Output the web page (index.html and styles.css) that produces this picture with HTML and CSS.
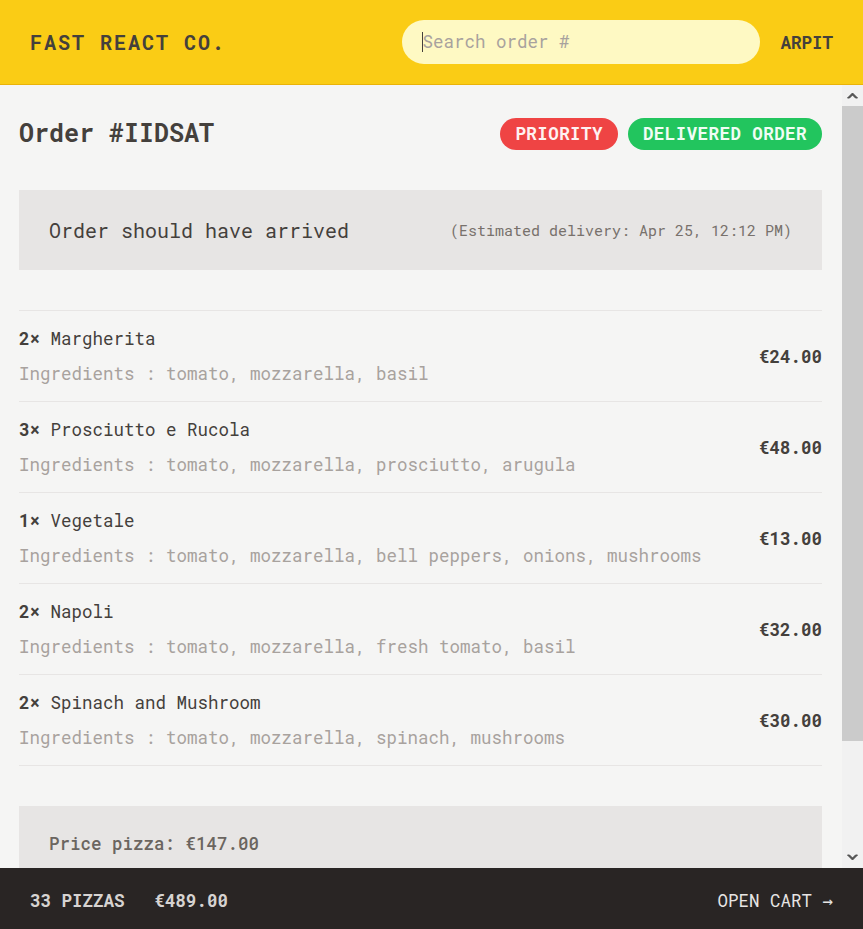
FILE: index.html
```html
<!DOCTYPE html>
<html lang="en">
<head>
<meta charset="utf-8">
<title>Fast React Co.</title>
<link rel="stylesheet" href="styles.css">
</head>
<body>
<div class="app">
  <header class="header">
    <a class="logo" href="#">Fast React Co.</a>
    <div class="header-right">
      <div class="search-box">
        <span class="caret"></span>
        <input class="search" type="text" placeholder="Search order #">
      </div>
      <div class="username">Arpit</div>
    </div>
  </header>

  <div class="main-wrap">
    <main class="main">
      <div class="order">
        <div class="order-head">
          <h2 class="order-title">Order #IIDSAT</h2>
          <div class="badges">
            <span class="badge badge-red">Priority</span>
            <span class="badge badge-green">Delivered order</span>
          </div>
        </div>

        <div class="status">
          <p class="status-main">Order should have arrived</p>
          <p class="status-eta">(Estimated delivery: Apr 25, 12:12 PM)</p>
        </div>

        <ul class="items">
          <li class="item">
            <div class="item-info">
              <p class="item-name"><span class="qty">2×</span> Margherita</p>
              <p class="item-ing">Ingredients : tomato, mozzarella, basil</p>
            </div>
            <p class="item-price">€24.00</p>
          </li>
          <li class="item">
            <div class="item-info">
              <p class="item-name"><span class="qty">3×</span> Prosciutto e Rucola</p>
              <p class="item-ing">Ingredients : tomato, mozzarella, prosciutto, arugula</p>
            </div>
            <p class="item-price">€48.00</p>
          </li>
          <li class="item">
            <div class="item-info">
              <p class="item-name"><span class="qty">1×</span> Vegetale</p>
              <p class="item-ing">Ingredients : tomato, mozzarella, bell peppers, onions, mushrooms</p>
            </div>
            <p class="item-price">€13.00</p>
          </li>
          <li class="item">
            <div class="item-info">
              <p class="item-name"><span class="qty">2×</span> Napoli</p>
              <p class="item-ing">Ingredients : tomato, mozzarella, fresh tomato, basil</p>
            </div>
            <p class="item-price">€32.00</p>
          </li>
          <li class="item">
            <div class="item-info">
              <p class="item-name"><span class="qty">2×</span> Spinach and Mushroom</p>
              <p class="item-ing">Ingredients : tomato, mozzarella, spinach, mushrooms</p>
            </div>
            <p class="item-price">€30.00</p>
          </li>
        </ul>

        <div class="prices">
          <p class="price-line">Price pizza: €147.00</p>
        </div>
      </div>
    </main>

    <div class="scrollbar" aria-hidden="true">
      <div class="sb-button">
        <svg width="21" height="21" viewBox="0 0 21 21"><path d="M5.5 13 L10.5 8 L15.5 13 L13.5 13 L10.5 10 L7.5 13 Z" fill="#505050" stroke="#505050" stroke-width="1" stroke-linejoin="round"/></svg>
      </div>
      <div class="sb-track">
        <div class="sb-thumb"></div>
      </div>
      <div class="sb-button">
        <svg width="21" height="21" viewBox="0 0 21 21"><path d="M5.5 8 L10.5 13 L15.5 8 L13.5 8 L10.5 11 L7.5 8 Z" fill="#505050" stroke="#505050" stroke-width="1" stroke-linejoin="round"/></svg>
      </div>
    </div>
  </div>

  <footer class="footer">
    <p class="cart-summary"><span>33 pizzas</span><span>€489.00</span></p>
    <a class="cart-link" href="#">Open cart &rarr;</a>
  </footer>
</div>
</body>
</html>
```

FILE: styles.css
```css
* {
  box-sizing: border-box;
  margin: 0;
  padding: 0;
}

html, body {
  height: 100%;
}

body {
  font-family: "Roboto Mono", "DejaVu Sans Mono", monospace;
  color: #44403c;
  background: #f5f5f4;
}

.app {
  display: grid;
  grid-template-rows: auto 1fr auto;
  height: 100vh;
  overflow: hidden;
}

/* Header */
.header {
  display: flex;
  align-items: center;
  justify-content: space-between;
  height: 85px;
  padding: 0 30px;
  background: #facc15;
  border-bottom: 1px solid #eab308;
  text-transform: uppercase;
}

.logo {
  color: #44403c;
  text-decoration: none;
  font-size: 20px;
  font-weight: 700;
  letter-spacing: 0.1em;
}

.header-right {
  display: flex;
  align-items: center;
  gap: 20px;
}

.search-box {
  display: flex;
  align-items: center;
  width: 358px;
  height: 44px;
  margin-top: -1px;
  border-radius: 22px;
  background: #fef9c3;
  padding: 0 20px;
}

.caret {
  width: 1px;
  height: 20px;
  background: #44403c;
  flex: 0 0 1px;
  margin-right: -1px;
}

.search {
  flex: 1;
  min-width: 0;
  border: none;
  background: transparent;
  font-family: inherit;
  font-size: 17.5px;
  color: #44403c;
  outline: none;
}

.search::placeholder {
  color: #a8a29e;
}

.username {
  font-size: 17.5px;
  font-weight: 700;
}

/* Main area with scrollbar */
.main-wrap {
  display: grid;
  grid-template-columns: 1fr 21px;
  min-height: 0;
}

.main {
  overflow: hidden;
  background: #f5f5f4;
  min-height: 0;
}

.scrollbar {
  display: flex;
  flex-direction: column;
  background: #f1f1f1;
  min-height: 0;
}

.sb-button {
  height: 21px;
  flex: 0 0 21px;
  display: flex;
  align-items: center;
  justify-content: center;
}

.sb-button svg {
  display: block;
}

.sb-track {
  flex: 1;
  display: flex;
  flex-direction: column;
}

.sb-thumb {
  height: 635px;
  background: #cbcbcb;
}

.order {
  padding: 30px 20px 30px 19px;
  display: flex;
  flex-direction: column;
  gap: 40px;
}

.order-head {
  display: flex;
  align-items: center;
  justify-content: space-between;
  height: 35px;
}

.order-title {
  font-size: 25px;
  font-weight: 700;
  line-height: 35px;
}

.badges {
  display: flex;
  gap: 10px;
  margin-top: 2px;
}

.badge {
  display: inline-block;
  padding: 5px 15px;
  border-radius: 999px;
  font-size: 17.5px;
  line-height: 22px;
  font-weight: 700;
  letter-spacing: 0.025em;
  text-transform: uppercase;
}

.badge-red {
  background: #ef4444;
  color: #fef2f2;
}

.badge-green {
  background: #22c55e;
  color: #f0fdf4;
}

.status {
  display: flex;
  flex-wrap: wrap;
  align-items: center;
  justify-content: space-between;
  gap: 10px;
  padding: 25px 30px;
  background: #e7e5e4;
}

.status-main {
  font-size: 20px;
  line-height: 30px;
  font-weight: 400;
}

.status-eta {
  font-size: 15px;
  line-height: 20px;
  color: #78716c;
}

.items {
  list-style: none;
  border-top: 1px solid #e7e5e4;
  border-bottom: 1px solid #e7e5e4;
}

.item {
  display: flex;
  align-items: center;
  justify-content: space-between;
  gap: 20px;
  padding: 15px 0;
  font-size: 17.5px;
  line-height: 25px;
}

.item + .item {
  border-top: 1px solid #e7e5e4;
}

.qty {
  font-weight: 700;
}

.item-ing {
  margin-top: 10px;
  color: #a8a29e;
}

.item-price {
  font-weight: 700;
}

.prices {
  padding: 25px 30px 95px;
  background: #e7e5e4;
  font-size: 17.5px;
  line-height: 25px;
}

.price-line {
  font-weight: 500;
  color: #6b6560;
}

/* Footer */
.footer {
  display: flex;
  align-items: flex-start;
  justify-content: space-between;
  height: 61px;
  padding: 20px 30px 0;
  background: #292524;
  color: #e7e5e4;
  font-size: 17.5px;
  line-height: 25px;
  text-transform: uppercase;
}

.cart-summary {
  display: flex;
  gap: 30px;
  font-weight: 700;
  color: #d6d3d1;
}

.cart-link {
  color: #e7e5e4;
  text-decoration: none;
}
```
